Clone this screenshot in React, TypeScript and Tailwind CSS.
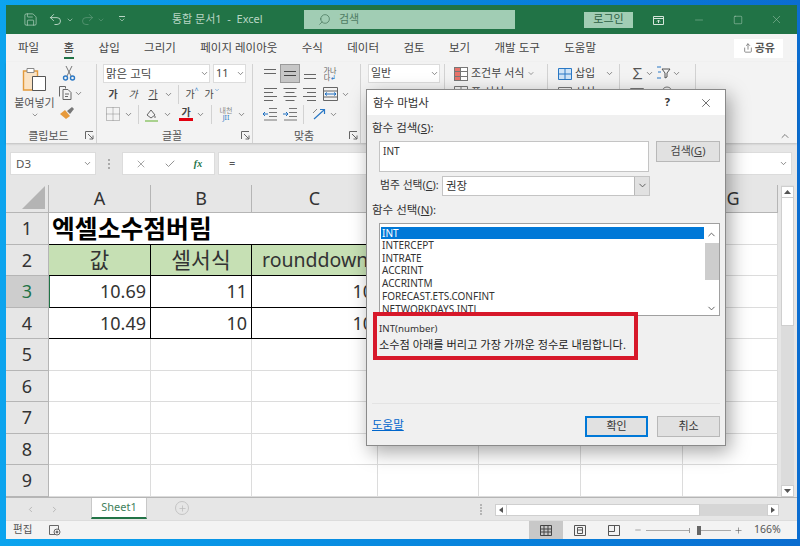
import React from "react";
import { ChevronDown, ChevronUp, Search, Minus, Square, X, Check, Plus, ChevronLeft, ChevronRight, Undo2, Redo2, Save, Share } from "lucide-react";

const Chev = ({ c = "w-[10px]" }: { c?: string }) => (
  <span className={`${c} flex justify-center shrink-0`}>
    <ChevronDown size={9} strokeWidth={2} color="#666" />
  </span>
);
const Sep = ({ c = "" }: { c?: string }) => <span className={`w-px h-[19px] bg-[#d2d2d2] shrink-0 ${c}`} />;

const Launcher = () => (
  <svg width="9" height="9" viewBox="0 0 9 9" className="shrink-0" fill="none" stroke="#666" strokeWidth="1">
    <path d="M.5 8V.5H8M3 3l5 5M8 4.5V8H4.5" />
  </svg>
);

const Lines = ({ widths, y = [2, 6, 10, 14], color = "#666", align = "l" }: { widths: number[]; y?: number[]; color?: string; align?: "l" | "c" | "r" }) => (
  <svg width="14" height="16" viewBox="0 0 14 16" stroke={color} strokeWidth="1">
    {widths.map((w, i) => {
      const x = align === "l" ? 1 : align === "c" ? 7 - w / 2 : 13 - w;
      return <path key={i} d={`M${x} ${(y[i] ?? 0) + 0.5}h${w}`} />;
    })}
  </svg>
);

const Indent = ({ dir }: { dir: "l" | "r" }) => (
  <svg width="14" height="14" viewBox="0 0 14 14" fill="none">
    <path d="M6 1.5h8M6 5.5h8M6 9.5h8M1 13h13" stroke="#777" />
    <path d={dir === "l" ? "M0 7h5M2 5 0 7l2 2" : "M0 7h5M3 5l2 2-2 2"} stroke="#1e6fc0" />
  </svg>
);

const Cell20 = ({ children, w = "w-[20px]" }: { children: React.ReactNode; w?: string }) => (
  <span className={`${w} h-full flex items-center justify-center shrink-0`}>{children}</span>
);

const Group = ({ w, label, launcher = true, children }: { w: string; label?: string; launcher?: boolean; children: React.ReactNode }) => (
  <div className={`${w} shrink-0 h-[79px] mt-[2px] border-r border-[#d2d2d2] flex flex-col`}>
    <div className="h-[64px] overflow-hidden">{children}</div>
    <div className="h-[15px] flex items-center pr-[2px]">
      <span className="flex-1 text-center text-[11px] leading-none text-[#555] pl-[6px]">{label}</span>
      {launcher && <Launcher />}
    </div>
  </div>
);

const colW = ["A", "B", "C", "D", "E", "F", "G"];
const rows: Record<number, string[]> = {
  1: ["엑셀소수점버림"],
  2: ["값", "셀서식", "rounddown"],
  3: ["10.69", "11", "10"],
  4: ["10.49", "10", "10"],
};

function Sheet() {
  const cells: React.ReactNode[] = [];
  cells.push(
    <div key="corner" className="bg-[#e6e6e6] border-r border-b border-[#b5b5b5] flex items-end justify-end pr-[3px] pb-[3px]">
      <svg width="23" height="23" viewBox="0 0 23 23"><path d="M23 0v23H0z" fill="#b4b4b4" /></svg>
    </div>
  );
  colW.forEach((c) =>
    cells.push(
      <div key={c} className={`bg-[#e6e6e6] border-r border-b border-[#b5b5b5] flex items-center justify-center text-[18px] text-[#333] ${c === "G" ? "pl-[6px]" : ""}`}>{c}</div>
    )
  );
  for (let r = 1; r <= 9; r++) {
    cells.push(
      <div key={`h${r}`} className={`border-r border-b border-[#b5b5b5] flex items-center justify-center text-[18px] ${r === 3 ? "bg-[#cdcdcd] text-[#217346]" : "bg-[#e6e6e6] text-[#333]"}`}>{r}</div>
    );
    colW.forEach((_, ci) => {
      const v = rows[r]?.[ci];
      const tableCell = ci < 3 && (r === 1 || r === 2 || r === 3 || r === 4);
      let cls = "border-r border-b border-[#dcdcdc] bg-white flex items-center whitespace-nowrap text-[#222] ";
      if (r === 1 && ci < 3) cls = "border-b border-black bg-white flex items-center whitespace-nowrap text-black ";
      else if (r === 2 && ci < 3) cls = "border-r border-b border-black bg-[#c6e0b4] flex items-center justify-center whitespace-nowrap text-[#333] ";
      else if (tableCell) cls = "border-r border-b border-black bg-white flex items-center justify-end pr-[4px] whitespace-nowrap text-[#333] ";
      if (r === 2 && ci === 2) cls = "border-b border-black bg-[#c6e0b4] flex items-center pl-[10px] whitespace-nowrap text-[#333] ";
      if (r === 3 && ci === 0) cls += "border-l border-l-[#217346] ";
      let size = "text-[18px]";
      if (r === 1) size = ci === 0 ? "text-[24.8px] font-bold pl-[3px] relative z-10" : "";
      if (r === 2) size = ci === 2 ? "text-[19.5px]" : "text-[21.5px]";
      cells.push(<div key={`${r}-${ci}`} className={`${cls} ${size}`}>{v}</div>);
    });
  }
  return (
    <div className="grid grid-cols-[43px_102px_101px_126px_101px_102px_102px_95px] grid-rows-[28px_32px_31px_32px_31px_32px_31px_32px_31px_32px] w-[772px] overflow-hidden">
      {cells}
    </div>
  );
}

const fnList = ["INTERCEPT", "INTRATE", "ACCRINT", "ACCRINTM", "FORECAST.ETS.CONFINT", "NETWORKDAYS.INTL"];

function Dialog() {
  return (
    <div className="absolute left-[366px] top-[89px] w-[360px] h-[357px] bg-[#f0f0f0] border border-[#8a8a8a] shadow-[4px_6px_18px_rgba(0,0,0,0.35)] text-[#333] text-[11px] flex flex-col z-20">
      <div className="h-[25px] bg-white flex items-center pl-[6px] text-[11.5px] shrink-0">
        <span className="flex-1">함수 마법사</span>
        <span className="font-bold text-[11px] mr-[29px]">?</span>
        <X size={14} strokeWidth={1.2} className="mr-[12px]" color="#333" />
      </div>
      <div className="pl-[5px] h-[26px] flex items-center text-[11.5px] shrink-0">
        <span>함수 검색(<u>S</u>):</span>
      </div>
      <div className="flex pl-[12px] shrink-0">
        <div className="w-[270px] h-[31px] bg-white border border-[#c4c4c4] pl-[3px] pt-[2px] text-[10px]">INT</div>
        <button className="ml-[7px] w-[64px] h-[21px] bg-[#e1e1e1] border border-[#b8b8b8] text-[11px] text-[#444]">검색(<u>G</u>)</button>
      </div>
      <div className="flex items-center pl-[13px] mt-[3px] h-[21px] shrink-0">
        <span className="w-[62px] text-[10.8px] whitespace-nowrap">범주 선택(<u>C</u>):</span>
        <div className="w-[208px] h-[20px] bg-white border border-[#c4c4c4] flex items-center pl-[3px] text-[11.5px]">
          <span className="flex-1">권장</span>
          <span className="w-[15px] h-full bg-[#e1e1e1] border-l border-[#b8b8b8] flex items-center justify-center"><ChevronDown size={11} strokeWidth={2} color="#555" /></span>
        </div>
      </div>
      <div className="pl-[5px] h-[27px] flex items-center text-[11.5px] shrink-0">
        <span>함수 선택(<u>N</u>):</span>
      </div>
      <div className="ml-[12px] w-[341px] h-[93px] bg-white border border-[#a0a0a0] flex shrink-0 overflow-hidden">
        <div className="flex-1 pt-[3px] pl-px text-[10px] leading-[12.7px] whitespace-nowrap">
          <div className="bg-[#0078d7] text-white pl-[1px] h-[12px] leading-[12px]">INT</div>
          {fnList.map((f) => <div key={f} className="pl-[1px]">{f}</div>)}
        </div>
        <div className="w-[15px] flex flex-col items-center pt-[5px]">
          <ChevronUp size={11} strokeWidth={2} color="#555" />
          <div className="w-[14px] h-[37px] bg-[#cdcdcd] mt-[3px]" />
          <div className="mt-[23px]"><ChevronDown size={11} strokeWidth={2} color="#555" /></div>
        </div>
      </div>
      <div className="h-[88px] shrink-0 mx-[5px] border-b border-[#e3e3e3]" />
      <div className="flex items-start pl-[5px] pt-[12px] pr-[5px]">
        <span className="text-[#0066cc] underline text-[11.5px] flex-1">도움말</span>
        <button className="w-[63px] h-[21px] bg-[#e1e1e1] border-2 border-[#0078d7] text-[11px]">확인</button>
        <button className="ml-[9px] w-[63px] h-[21px] bg-[#e1e1e1] border border-[#b8b8b8] text-[11px]">취소</button>
      </div>
      <div className="absolute left-[6px] top-[222px] w-[265px] h-[48px] border-[4px] border-[#d7182a] bg-[#f0f0f0] pl-[2px] flex flex-col justify-center gap-[3px] leading-[13px]">
        <span className="text-[9.7px]">INT(number)</span>
        <span className="whitespace-nowrap text-[#222] text-[11.2px]">소수점 아래를 버리고 가장 가까운 정수로 내림합니다.</span>
      </div>
    </div>
  );
}

export default function App() {
  return (
    <div className="relative w-[800px] h-[546px] overflow-hidden bg-gradient-to-r from-[#0ca4ee] to-[#0b6dd0] pt-[5px] pl-[6px] font-['Noto_Sans','Noto_Sans_CJK_KR',sans-serif]">
      <div className="w-[791px] h-[534px] bg-[#e6e6e6] flex flex-col">
        {/* Title bar */}
        <div className="h-[29px] bg-[#217346] flex items-center text-[#d5e6db] shrink-0">
          <Save size={15} strokeWidth={1.1} className="ml-[17px]" color="#b9d6c5" />
          <Undo2 size={15} strokeWidth={1.3} className="ml-[10px]" color="#d5e6db" />
          <span className="ml-[3px]"><ChevronDown size={8} strokeWidth={2} color="#b9d6c5" /></span>
          <Redo2 size={15} strokeWidth={1.2} className="ml-[6px]" color="#5f9a7a" />
          <span className="ml-[2px]"><ChevronDown size={8} strokeWidth={2} color="#5f9a7a" /></span>
          <span className="ml-[13px] flex flex-col items-center w-[8px]"><span className="w-[6px] h-px bg-[#b9d6c5] mb-[1px]" /><ChevronDown size={8} strokeWidth={2} color="#b9d6c5" className="-mt-[2px]" /></span>
          <span className="ml-[46px] w-[92px] text-[11px] whitespace-nowrap text-[#b9d6c5]">통합 문서1 &nbsp;-&nbsp; Excel</span>
          <div className="ml-[40px] w-[211px] h-[19px] bg-[#a1cdb4] flex items-center pl-[14px] text-[#4f7c63] text-[11px]">
            <Search size={13} strokeWidth={1.2} className="-scale-x-100" color="#3d6a51" />
            <span className="ml-[8px]">검색</span>
          </div>
          <div className="ml-[69px] w-[49px] h-[16px] bg-[#a1cdb4] flex items-center justify-center text-[11px] text-[#2c5e42]">로그인</div>
          <svg width="11" height="10" viewBox="0 0 11 10" className="ml-[20px]" fill="none" stroke="#d5e6db"><path d="M.5 1.5h10v8H.5zM.5 3.5h10M5.5 5v3M4 6.5l1.5-1.5L7 6.5" /></svg>
          <Minus size={12} strokeWidth={1} className="ml-[29px]" color="#9fc5ae" />
          <Square size={10} strokeWidth={1} className="ml-[28px]" color="#d5e6db" />
          <X size={13} strokeWidth={1} className="ml-[27px]" color="#9fc5ae" />
        </div>
        {/* Tabs */}
        <div className="h-[28px] bg-[#f3f3f3] flex items-center pl-[12px] gap-[24.4px] text-[11.5px] text-[#444] shrink-0 whitespace-nowrap">
          <span>파일</span>
          <span className="relative h-full flex items-center text-[#333]">홈<span className="absolute left-0 right-0 bottom-[3px] h-[2px] bg-[#217346]" /></span>
          <span>삽입</span><span>그리기</span><span>페이지 레이아웃</span><span>수식</span><span>데이터</span><span>검토</span><span>보기</span><span>개발 도구</span><span>도움말</span>
          <div className="ml-[114px] w-[49px] h-[19px] bg-white flex items-center justify-center gap-[2px] text-[#555] font-bold text-[11px]">
            <Share size={10} color="#777" />공유
          </div>
        </div>
        {/* Ribbon */}
        <div className="h-[81px] bg-[#f3f3f3] flex shrink-0 text-[#555] shadow-[0_1px_2px_rgba(0,0,0,0.18)] relative z-[1]">
          <Group w="w-[91px]" label="클립보드">
            <div className="flex h-full">
              <div className="w-[50px] flex flex-col items-center pl-[7px] whitespace-nowrap">
                <svg width="26" height="26" viewBox="0 0 26 26" className="mt-[2px]" fill="none">
                  <path d="M1.5 5h14v19h-14z" fill="#fbe3c4" stroke="#e39a3b" strokeWidth="1.4" />
                  <path d="M5 2.500h7v4H5z" fill="#fff" stroke="#888" />
                  <path d="M10.500 10.500h13v14h-13z" fill="#fff" stroke="#555" />
                </svg>
                <span className="text-[11px] leading-none mt-[5px]">붙여넣기</span>
                <ChevronDown size={8} strokeWidth={2} color="#666" className="mt-[3px]" />
              </div>
              <div className="flex flex-col items-start pl-[2px]">
                <svg width="14" height="16" viewBox="0 0 14 16" className="ml-[4px] mt-[1px]" fill="none">
                  <path d="M4 1l5 10M10 1L5 11" stroke="#777" />
                  <circle cx="3.500" cy="13" r="2" stroke="#2a78c5" strokeWidth="1.4" />
                  <circle cx="10.500" cy="13" r="2" stroke="#2a78c5" strokeWidth="1.4" />
                </svg>
                <span className="flex items-center mt-[4px]">
                  <svg width="15" height="16" viewBox="0 0 15 16" fill="none" stroke="#666"><path d="M1.500 11.500v-10h6v2" /><path d="M5 4.500h5l3 3v7H5z" fill="#f3f3f3" /><path d="M7 9h4M7 11.500h3" /></svg>
                  <Chev c="w-[11px]" />
                </span>
                <svg width="16" height="14" viewBox="0 0 16 14" className="ml-[1px] mt-[5px]" fill="none">
                  <path d="M1 8l5-4 5 6-4 3z" fill="#e79a3c" />
                  <path d="M8 5l5-4 2 2-4 5z" fill="#777" />
                </svg>
              </div>
            </div>
          </Group>
          <Group w="w-[156px]" label="글꼴">
            <div className="pl-[6px] flex flex-col">
              <div className="flex gap-[3px] h-[19px]">
                <div className="w-[107px] bg-white border border-[#dcdcdc] flex items-center pl-[2px] text-[11.5px] text-[#444]"><span className="flex-1">맑은 고딕</span><Chev /></div>
                <div className="w-[33px] bg-white border border-[#dcdcdc] flex items-center pl-[2px] text-[11px] text-[#444]"><span className="flex-1">11</span><Chev /></div>
              </div>
              <div className="flex items-center h-[20px] mt-px text-[10px] text-[#444]">
                <Cell20><b>가</b></Cell20><Cell20><i>가</i></Cell20><Cell20><u>가</u></Cell20><Chev />
                <Sep c="ml-[5px] mr-[3px]" />
                <Cell20><span className="flex items-start">가<span className="text-[#2a78c5] text-[7px] leading-none">^</span></span></Cell20>
                <Cell20><span className="flex items-start">가<ChevronDown size={6} color="#2a78c5" /></span></Cell20>
              </div>
              <div className="flex items-center h-[20px] text-[10px] text-[#444]">
                <svg width="14" height="14" viewBox="0 0 14 14" className="ml-[3px]" fill="none" stroke="#888" strokeDasharray="1 1"><path d="M.5.5h13v13H.5zM7 .5v13M.5 7h13" /></svg>
                <Chev c="w-[11px] ml-[3px]" />
                <Sep c="ml-[4px] mr-[5px]" />
                <svg width="16" height="16" viewBox="0 0 16 16" fill="none"><path d="M3 9l4-5 4 5-4 3z" stroke="#666" /><path d="M11 10v2" stroke="#666" /><path d="M1 14h13v2H1z" fill="#a9d18e" /></svg>
                <Chev c="w-[10px] ml-[2px]" />
                <span className="ml-[7px] flex flex-col items-center w-[14px] font-bold leading-[11px]">가<span className="w-[14px] h-[3px] bg-[#e3000f]" /></span>
                <Chev c="w-[10px] ml-[2px]" />
                <Sep c="ml-[6px] mr-[4px]" />
                <span className="w-[20px] flex flex-col items-center text-[7px] leading-[7px] text-[#888]">내천<span className="text-[#2a78c5]">JII</span></span>
                <Chev />
              </div>
            </div>
          </Group>
          <Group w="w-[108px]" label="맞춤">
            <div className="pl-[7px] flex flex-col">
              <div className="flex items-center h-[19px]">
                <Cell20><Lines widths={[12, 12]} y={[3, 7]} /></Cell20>
                <span className="w-[20px] h-[19px] bg-[#c6c6c6] border border-[#9a9a9a] flex items-center justify-center"><Lines widths={[12, 12]} y={[5, 9]} color="#444" /></span>
                <Cell20><Lines widths={[12, 12]} y={[8, 12]} /></Cell20>
                <Cell20><span className="text-[7px] leading-[7px] text-[#555] text-center">가나<br />다<span className="text-[#2a78c5]">↲</span></span></Cell20>
              </div>
              <div className="flex items-center h-[20px] mt-px">
                <Cell20><Lines widths={[13, 9, 13, 9]} /></Cell20>
                <Cell20><Lines widths={[13, 9, 13, 9]} align="c" /></Cell20>
                <Cell20><Lines widths={[13, 9, 13, 9]} align="r" /></Cell20>
                <Cell20>
                  <svg width="15" height="14" viewBox="0 0 15 14" fill="none"><path d="M.5.5h14v13H.5zM.5 4h14M.5 10h14" stroke="#666" /><path d="M2 7h11M4 5.500 2 7l2 1.500M11 5.500 13 7l-2 1.500" stroke="#1e6fc0" /></svg>
                </Cell20>
                <Chev />
              </div>
              <div className="flex items-center h-[20px]">
                <Cell20><Indent dir="l" /></Cell20>
                <Cell20><Indent dir="r" /></Cell20>
                <Sep c="ml-[3px] mr-[8px]" />
                <svg width="14" height="14" viewBox="0 0 14 14" fill="none"><path d="M2 12 12 3M8 2.500h4.500V7" stroke="#2a78c5" strokeWidth="1.2" /><path d="M1 6l4-4" stroke="#888" /></svg>
                <Chev c="w-[10px] ml-[2px]" />
              </div>
            </div>
          </Group>
          <Group w="w-[84px]" label="표시 형식">
            <div className="pl-[7px]">
              <div className="w-[72px] h-[19px] bg-white border border-[#dcdcdc] flex items-center pl-[2px] text-[11px] text-[#444]"><span className="flex-1">일반</span><Chev /></div>
            </div>
          </Group>
          <Group w="w-[103px]" label="스타일" launcher={false}>
            <div className="pl-[9px] text-[11px] text-[#444] flex flex-col whitespace-nowrap">
              <div className="flex items-center h-[19px] gap-[3px]">
                <svg width="14" height="14" viewBox="0 0 14 14"><path d="M0 0h14v14H0z" fill="#777" /><path d="M1 1h5v3H1zM1 5h5v4H1zM1 10h5v3H1z" fill="#e9736a" /><path d="M7 1h6v3H7zM7 5h6v4H7zM7 10h6v3H7z" fill="#fff" /></svg>
                조건부 서식<Chev c="w-[8px]" />
              </div>
              <div className="flex items-center h-[19px] gap-[3px]">
                <svg width="14" height="14" viewBox="0 0 14 14" fill="none" stroke="#777"><path d="M.5.5h13v13H.5zM.5 5h13M7 .5v13" /></svg>
                표 서식
              </div>
            </div>
          </Group>
          <Group w="w-[72px]" label="셀" launcher={false}>
            <div className="pl-[10px] text-[11px] text-[#444] flex flex-col whitespace-nowrap">
              <div className="flex items-center h-[19px] gap-[3px]">
                <svg width="14" height="12" viewBox="0 0 14 12" fill="none"><path d="M.5.500h13v11H.5z" fill="#cfe4f7" stroke="#2a78c5" /><path d="M7 .5v11M1 6h12" stroke="#2a78c5" /></svg>
                삽입<Chev c="w-[10px] ml-[6px]" />
              </div>
              <div className="flex items-center h-[19px] gap-[3px]">
                <svg width="14" height="12" viewBox="0 0 14 12" fill="none" stroke="#777"><path d="M.5.500h13v11H.5zM.5 4h13" /></svg>
                서식
              </div>
            </div>
          </Group>
          <Group w="w-[76px]" launcher={false}>
            <div className="pl-[10px] flex flex-col">
              <div className="flex items-center h-[19px]">
                <span className="text-[15px] leading-none text-[#555] w-[12px] text-center">∑</span>
                <Chev c="w-[14px]" />
                <svg width="15" height="15" viewBox="0 0 15 15" fill="none"><path d="M6 3h8L11 7v4l-2 1V7z" stroke="#555" /><path d="M1 1h4M2 6h3M1 12h4" stroke="#2a78c5" /></svg>
                <Chev c="w-[10px]" />
              </div>
              <div className="flex items-center h-[19px]">
                <svg width="14" height="14" viewBox="0 0 14 14" fill="none" stroke="#777"><path d="M.5 2.500h13v11H.5zM.5 5h13" /></svg>
                <svg width="14" height="14" viewBox="0 0 14 14" className="ml-[16px]" fill="none" stroke="#777"><circle cx="7" cy="6" r="5" /></svg>
              </div>
            </div>
          </Group>
          <div className="flex-1 flex items-end justify-end pr-[6px] pb-[1px]"><ChevronUp size={12} strokeWidth={1.5} color="#555" /></div>
        </div>
        {/* Formula bar */}
        <div className="h-[42px] flex items-start pt-[9px] pl-[4px] shrink-0 text-[#555]">
          <div className="w-[86px] h-[23px] bg-white border border-[#dcdcdc] flex items-center pl-[5px] text-[11.5px]"><span className="flex-1">D3</span><Chev c="w-[10px] mr-[3px]" /></div>
          <span className="w-[26px] h-[23px] flex flex-col items-center justify-center gap-[2px]">
            <i className="w-[2px] h-[2px] bg-[#aaa]" /><i className="w-[2px] h-[2px] bg-[#aaa]" /><i className="w-[2px] h-[2px] bg-[#aaa]" />
          </span>
          <div className="w-[93px] h-[23px] bg-white border border-[#dcdcdc] flex items-center justify-around px-[3px]">
            <X size={12} strokeWidth={1.3} color="#777" />
            <Check size={12} strokeWidth={1.6} color="#777" />
            <span className="text-[10px] italic font-bold font-['Liberation_Serif',serif] text-[#217346]">fx</span>
          </div>
          <div className="ml-[3px] w-[574px] h-[23px] bg-white border border-[#dcdcdc] flex items-center pl-[10px] pr-[3px] text-[11px]">
            <span className="flex-1">=</span><Chev c="w-[10px]" />
          </div>
        </div>
        {/* Sheet + vertical scrollbar */}
        <div className="flex h-[312px] shrink-0">
          <Sheet />
          <div className="ml-[3px] w-[13px] h-[312px] flex flex-col bg-[#e0e0e0]">
            <div className="mt-px h-[12px] bg-white border border-[#cfcfcf] flex items-center justify-center">
              <svg width="7" height="4" viewBox="0 0 7 4"><path d="M3.500 0 7 4H0z" fill="#555" /></svg>
            </div>
            <div className="h-[128px] bg-white border-x border-b border-[#cfcfcf]" />
            <div className="flex-1 bg-[#dcdcdc]" />
            <div className="h-[12px] bg-white border border-[#cfcfcf] flex items-center justify-center">
              <svg width="7" height="4" viewBox="0 0 7 4"><path d="M3.500 4 7 0H0z" fill="#555" /></svg>
            </div>
          </div>
        </div>
        {/* Sheet tabs */}
        <div className="h-[23px] bg-[#e6e6e6] flex items-start shrink-0 border-t border-[#b5b5b5]">
          <ChevronLeft size={9} strokeWidth={2} className="ml-[20px] mt-[7px]" color="#aaa" />
          <ChevronRight size={9} strokeWidth={2} className="ml-[15px] mt-[7px]" color="#aaa" />
          <div className="ml-[32px] w-[56px] h-[21px] bg-white border-x border-b-2 border-x-[#c8c8c8] border-b-[#217346] text-[#3f7f5c] text-[11px] flex items-center justify-center">Sheet1</div>
          <div className="ml-[28px] mt-[3px] w-[14px] h-[14px] rounded-full border border-[#c4c4c4] flex items-center justify-center"><Plus size={9} strokeWidth={2} color="#bbb" /></div>
          <span className="ml-[291px] mt-[6px] flex flex-col gap-[1px]">
            <i className="w-[2px] h-[2px] bg-[#b5b5b5]" /><i className="w-[2px] h-[2px] bg-[#b5b5b5]" /><i className="w-[2px] h-[2px] bg-[#b5b5b5]" /><i className="w-[2px] h-[2px] bg-[#b5b5b5]" />
          </span>
          <div className="ml-[13px] mt-[6px] w-[284px] h-[12px] bg-[#d6d6d6] flex">
            <div className="w-[12px] bg-white border border-[#cfcfcf] flex items-center justify-center"><svg width="4" height="6" viewBox="0 0 4 6"><path d="M0 3l4-3v6z" fill="#555" /></svg></div>
            <div className="w-[193px] bg-white border-y border-r border-[#cfcfcf]" />
            <div className="flex-1" />
            <div className="w-[12px] bg-white border border-[#cfcfcf] flex items-center justify-center"><svg width="4" height="6" viewBox="0 0 4 6"><path d="M4 3 0 0v6z" fill="#555" /></svg></div>
          </div>
        </div>
        {/* Status bar */}
        <div className="h-[19px] bg-[#f3f3f3] flex items-center text-[#555] border-t border-[#dcdcdc] flex-1">
          <span className="ml-[7px] w-[36px] text-[10.5px]">편집</span>
          <svg width="12" height="12" viewBox="0 0 12 12" fill="none" stroke="#666"><path d="M.5 1.500h9v9h-9z" /><circle cx="8" cy="8" r="3" fill="#f3f3f3" /><circle cx="8" cy="8" r="1" fill="#666" /></svg>
          <div className="ml-[468px] w-[34px] h-full bg-[#c8c8c8] flex items-center justify-center">
            <svg width="12" height="11" viewBox="0 0 12 11" fill="none" stroke="#444"><path d="M.5.500h11v10H.5zM4 .5v10M8 .5v10M.5 4h11M.5 7h11" /></svg>
          </div>
          <svg width="12" height="11" viewBox="0 0 12 11" className="ml-[11px]" fill="none" stroke="#555"><path d="M.5.500h11v10H.5zM3.500 2.500h5v6h-5zM3.500 5h5" /></svg>
          <svg width="12" height="11" viewBox="0 0 12 11" className="ml-[22px]" fill="none" stroke="#555"><path d="M.5.500h11v10H.5zM.5 6.500h6M6.500.5v6" /></svg>
          <Minus size={8} strokeWidth={1.5} className="ml-[14px]" color="#555" />
          <div className="ml-[4px] w-[85px] h-[9px] flex items-center">
            <div className="w-[43px] h-px bg-[#aaa]" />
            <div className="w-px h-[5px] bg-[#999]" />
            <div className="w-[7px]" />
            <div className="w-[4px] h-[9px] bg-[#666]" />
            <div className="flex-1 h-px bg-[#aaa]" />
          </div>
          <Plus size={9} strokeWidth={1.5} className="ml-[3px]" color="#555" />
          <span className="ml-[11px] text-[10.5px]">166%</span>
        </div>
      </div>
      <Dialog />
    </div>
  );
}
